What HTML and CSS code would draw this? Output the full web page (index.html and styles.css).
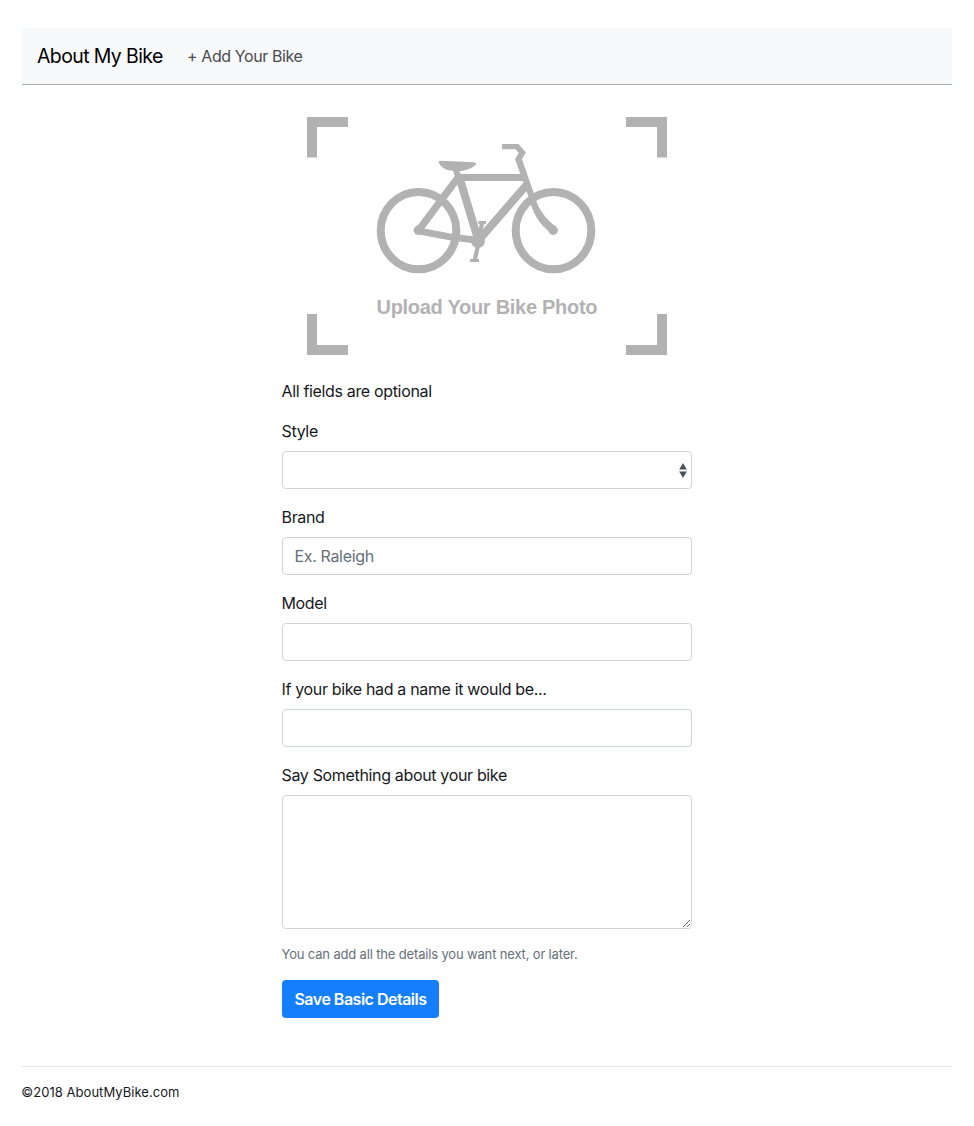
FILE: index.html
```html
<!DOCTYPE html>
<html lang="en">
<head>
<meta charset="utf-8">
<title>About My Bike</title>
<link rel="stylesheet" href="styles.css">
</head>
<body>
<nav class="navbar">
  <a class="brand" href="#">About My Bike</a>
  <a class="nav-link" href="#">+ Add Your Bike</a>
</nav>
<main class="form-column">
  <svg class="upload" viewBox="307 117 360 238" role="img" aria-label="Upload Your Bike Photo">
    <g class="frame">
      <path d="M307 117h41v10h-31v30.500h-10z"/>
      <path d="M667 117h-41v10h31v30.500h10z"/>
      <path d="M307 355h41v-10h-31v-31h-10z"/>
      <path d="M667 355h-41v-10h31v-31h10z"/>
    </g>
    <g class="bike-lines">
      <ellipse cx="418.500" cy="230.600" rx="37.800" ry="38.700" stroke-width="8"/>
      <ellipse cx="553.500" cy="230.600" rx="37.800" ry="38.700" stroke-width="8"/>
      <path d="M457.500 177.500H526" stroke-width="7.200"/>
      <path d="M458.500 177L418.500 230.500" stroke-width="7.200"/>
      <path d="M459 176L478.500 241" stroke-width="8"/>
      <path d="M418 230.800L450 236.800L478 240.300" stroke-width="6.800"/>
      <path d="M478 241L527 184.500" stroke-width="8"/>
      <path d="M482 223L479 241L474.500 261" stroke-width="4.200"/>
      <path d="M478.300 222.500H486M470 260.500H479" stroke-width="3.200"/>
    </g>
    <g class="bike-shapes">
      <circle cx="418.300" cy="230.300" r="4.700"/>
      <circle cx="553.200" cy="230.300" r="4.700"/>
      <circle cx="478" cy="241" r="6.900"/>
      <path d="M438.400 162Q438.500 160.600 440.500 160.700L474 162.300Q477 163 475.500 165C471 169 463 171 459.300 171L463 178H455.500L453 170.800C446 170.800 440.500 167 438.400 162Z"/>
      <path d="M502 144H518.500L525.900 152.500L521.900 159L534.900 196.500C538 209 546 219 555 226L550 232C540 225 533 214 529.300 199L515 159L518.800 153L515.700 149.300H502Z"/>
    </g>
    <text class="upload-text" x="376.500" y="313.600" textLength="221">Upload Your Bike Photo</text>
  </svg>
  <form class="bike-form">
    <p class="intro">All fields are optional</p>
    <div class="group">
      <label class="label" for="style">Style</label>
      <div class="select-wrap">
        <select class="control" id="style"><option></option></select>
        <svg class="arrows" viewBox="0 0 8 15"><path d="M4 0L7.800 6.500H.2zM4 15L7.800 8.500H.2z"/></svg>
      </div>
    </div>
    <div class="group">
      <label class="label" for="brand">Brand</label>
      <input class="control" id="brand" placeholder="Ex. Raleigh">
    </div>
    <div class="group">
      <label class="label" for="model">Model</label>
      <input class="control" id="model">
    </div>
    <div class="group">
      <label class="label" for="name">If your bike had a name it would be...</label>
      <input class="control" id="name">
    </div>
    <div class="group">
      <label class="label" for="about">Say Something about your bike</label>
      <textarea class="control area" id="about"></textarea>
    </div>
    <p class="help">You can add all the details you want next, or later.</p>
    <button class="save" type="button">Save Basic Details</button>
  </form>
</main>
<footer class="footer">©2018 AboutMyBike.com</footer>
</body>
</html>
```
FILE: styles.css
```css
* { box-sizing: border-box; }
body {
  margin: 0;
  padding: 28px 22px 0;
  background: #fff;
  color: #16191c;
  font: 16px/24px Inter, "Liberation Sans", sans-serif;
  letter-spacing: -0.34px;
}
.navbar {
  display: flex;
  align-items: center;
  height: 57px;
  padding: 0 15px;
  background: #f8f9fb;
  border-bottom: 1px solid #a9abad;
}
.navbar a { text-decoration: none; white-space: nowrap; }
.brand { width: 150px; color: #000; font-size: 19.5px; letter-spacing: -0.62px; }
.nav-link { color: #4b4c4d; letter-spacing: -0.4px; }
.form-column { width: 410px; margin: 32px auto 0; }
.upload { display: block; width: 360px; height: 238px; margin: 0 auto; }
.frame, .bike-shapes { fill: #b2b2b2; }
.bike-lines { fill: none; stroke: #b2b2b2; }
.upload-text { fill: #b2b2b2; font: bold 20px "Liberation Sans", Arial, sans-serif; letter-spacing: 0; }
.bike-form { padding-top: 24px; }
.intro { margin: 0 0 16px; text-indent: -0.5px; }
.group { margin-bottom: 16px; }
.label { display: block; margin-bottom: 8px; white-space: nowrap; text-indent: -0.5px; }
.control {
  display: block;
  width: 100%;
  height: 38px;
  margin: 0;
  padding: 6px 11.500px;
  border: 1px solid #ced4da;
  border-radius: 4px;
  background: #fff;
  color: #495057;
  font: inherit;
  letter-spacing: inherit;
  appearance: none;
}
.control::placeholder { color: #66707a; opacity: 1; }
.select-wrap { position: relative; }
.arrows { position: absolute; top: 12px; right: 5px; width: 8px; height: 15px; fill: #495057; pointer-events: none; }
.area { height: 134px; resize: vertical; }
.help { margin: 0 0 16px; color: #66707a; font-size: 13px; line-height: 19px; letter-spacing: -0.16px; text-indent: -0.5px; }
.save {
  display: block;
  width: 157px;
  height: 38px;
  padding: 0;
  border: 0;
  border-radius: 4px;
  background: #157efb;
  color: #fff;
  font: 600 16px/24px Inter, "Liberation Sans", sans-serif;
  letter-spacing: -0.5px;
}
.footer { margin-top: 48px; padding-top: 16px; border-top: 1px solid #e5e5e5; font-size: 13px; line-height: 19px; letter-spacing: 0.04px; text-indent: -0.7px; }
```
